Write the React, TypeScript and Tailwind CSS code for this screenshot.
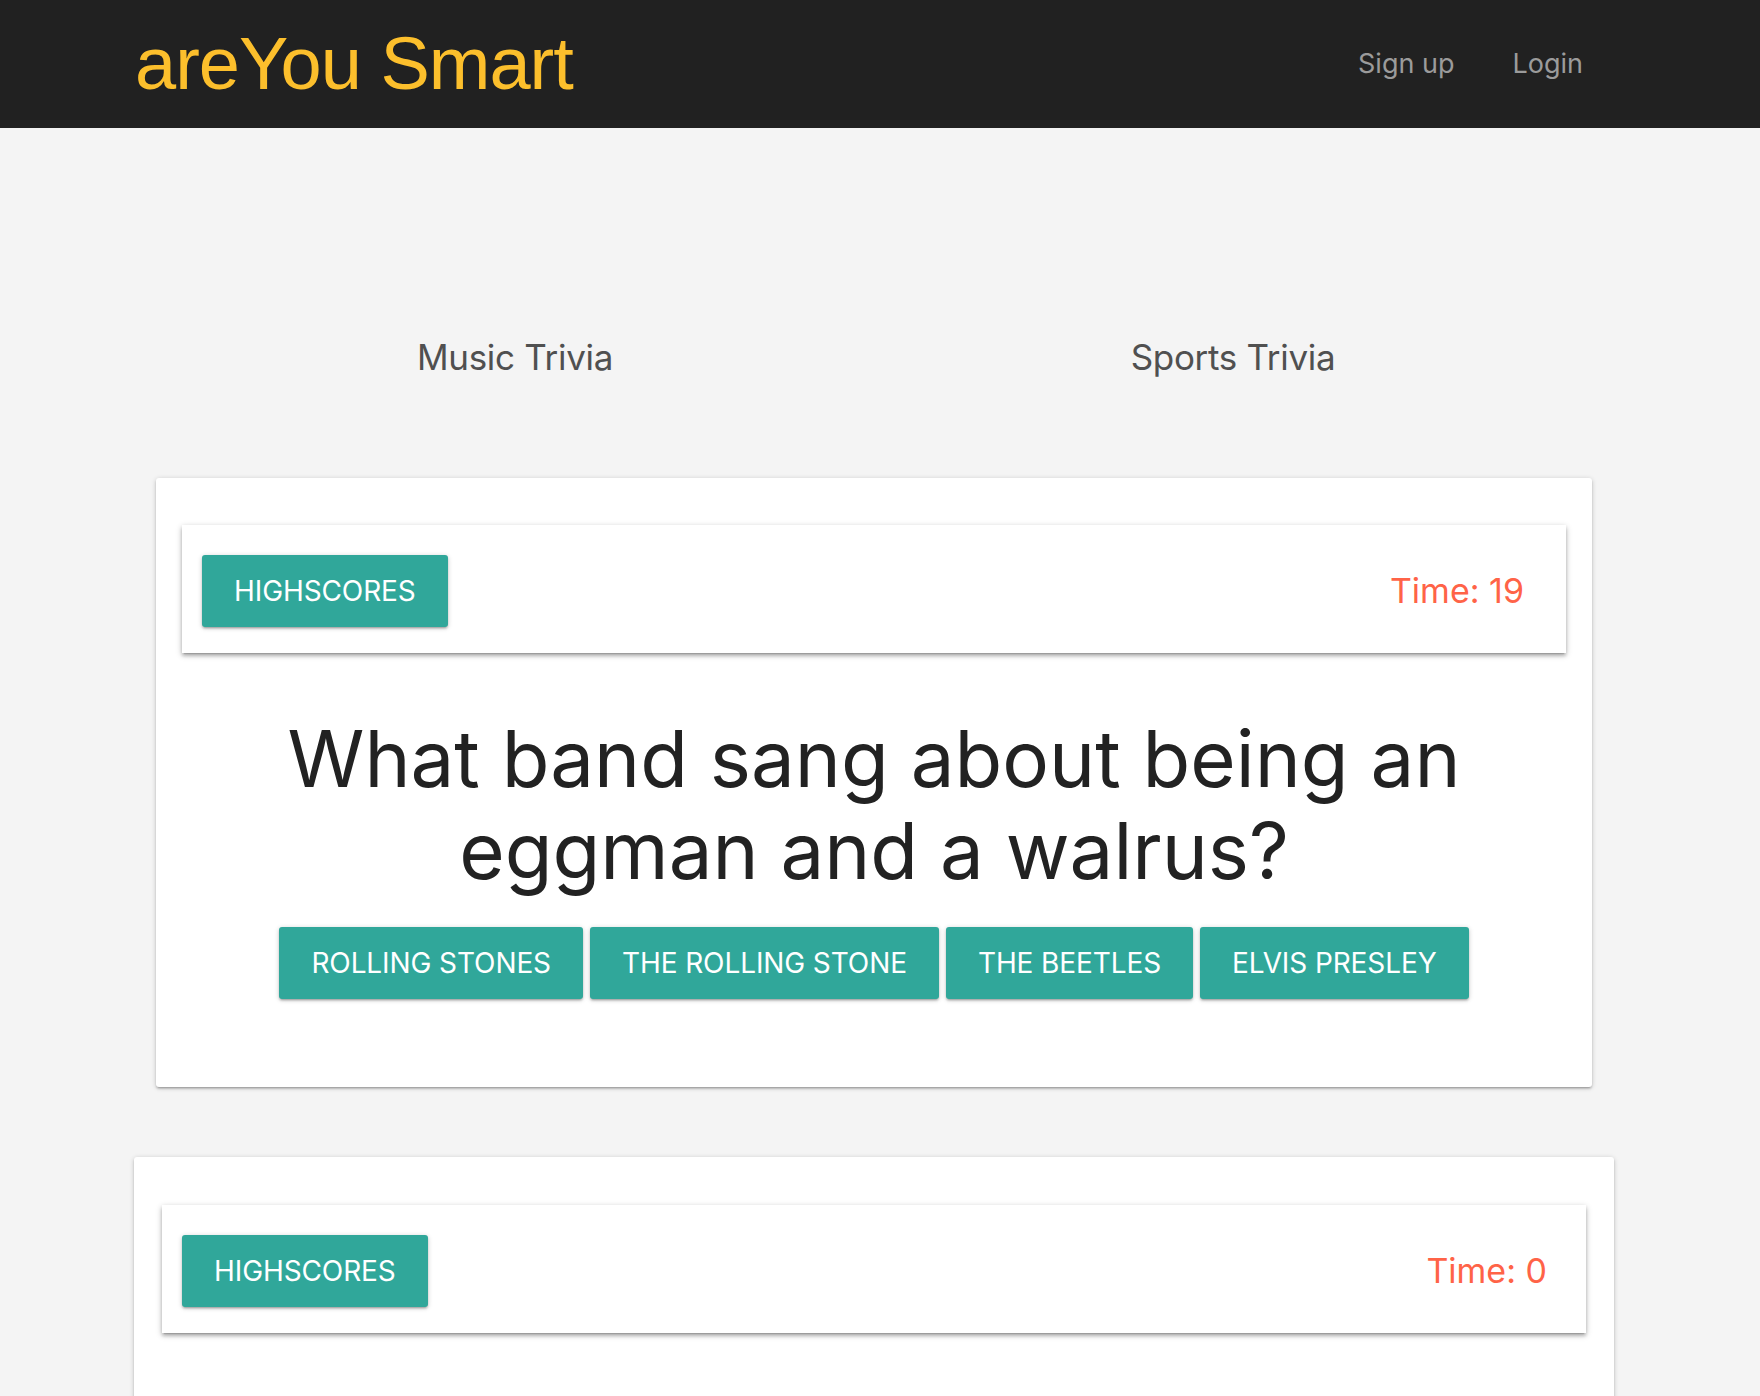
const sans = "font-['Inter','Noto_Sans',sans-serif]";
const cardShadow =
  'shadow-[0_2px_2px_0_rgba(0,0,0,0.14),0_3px_1px_-2px_rgba(0,0,0,0.12),0_1px_5px_0_rgba(0,0,0,0.2)]';
const headShadow =
  'shadow-[0_3px_3px_0_rgba(0,0,0,0.14),0_3px_1px_-2px_rgba(0,0,0,0.12),0_2px_6px_0_rgba(0,0,0,0.28)]';

const answers = ['Rolling Stones', 'The Rolling Stone', 'The Beetles', 'Elvis Presley'];

function TealButton({ label }: { label: string }) {
  return (
    <button
      className={`h-[72px] px-[32px] rounded-[3px] bg-[#30a79a] text-white text-[28px] uppercase tracking-[-0.1px] ${cardShadow}`}
    >
      {label}
    </button>
  );
}

function GameHeader({ time, right }: { time: number; right: string }) {
  return (
    <div className={`h-[128px] bg-white flex items-center justify-between pl-[20px] pt-[3px] ${right} ${headShadow}`}>
      <TealButton label="Highscores" />
      <span className="text-[34px] text-[#ff6347]">Time: {time}</span>
    </div>
  );
}

export default function App() {
  return (
    <div className={`min-h-[1396px] bg-[#f4f4f4] ${sans}`}>
      {/* nav */}
      <nav className="h-[128px] bg-[#212121] flex items-center justify-between pl-[135px] pr-[177px]">
        <a className="font-['Liberation_Sans',Arial,sans-serif] text-[74px] leading-none text-[#fcbf2c] tracking-[-1px]">
          areYou Smart
        </a>
        <ul className="flex items-center gap-[58px] text-[27px] text-[#9b9b9b]">
          <li>Sign up</li>
          <li>Login</li>
        </ul>
      </nav>

      <main className="w-[1480px] ml-[134px]">
        <div className="grid grid-cols-2 mx-[22px] pt-[208px] pb-[100px] text-[35px] leading-[42px] tracking-[-0.3px] text-[#505050] text-center">
          <span>Music Trivia</span>
          <span>Sports Trivia</span>
        </div>

        {/* music game */}
        <section className={`mx-[22px] bg-white rounded-[3px] pt-[47px] px-[26px] pb-[88px] ${cardShadow}`}>
          <GameHeader time={19} right="pr-[42px]" />
          <h2 className="mt-[60px] text-center text-[78px] leading-[92px] text-[#222]">
            What band sang about being an eggman and a walrus?
          </h2>
          <div className="mt-[30px] flex justify-center gap-[7px]">
            {answers.map((a) => (
              <TealButton key={a} label={a} />
            ))}
          </div>
        </section>

        {/* sports game */}
        <section className={`mt-[70px] bg-white rounded-[3px] pt-[48px] px-[28px] h-[400px] ${cardShadow}`}>
          <GameHeader time={0} right="pr-[39px]" />
        </section>
      </main>
    </div>
  );
}
